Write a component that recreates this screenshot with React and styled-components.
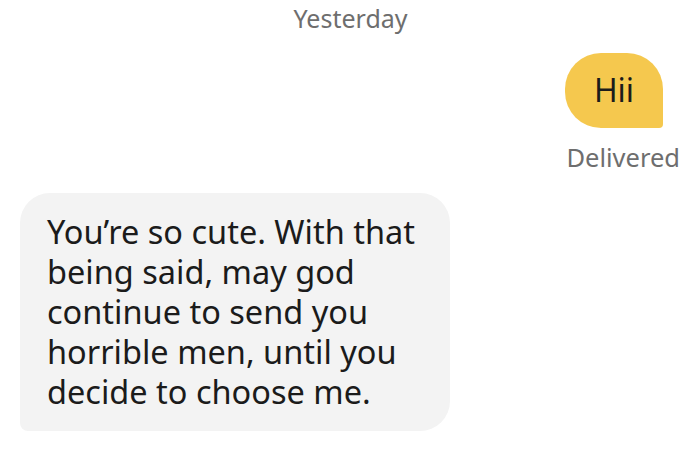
import React from "react";
import styled, { createGlobalStyle } from "styled-components";

const Global = createGlobalStyle`
  html, body { margin: 0; padding: 0; background: #ffffff; }
  body { font-family: "Noto Sans", "Open Sans", sans-serif; }
`;

const Screen = styled.div`
  width: 700px;
  height: 469px;
  box-sizing: border-box;
  padding: 3px 19px 0 19px;
  display: flex;
  flex-direction: column;
  background: #ffffff;
  overflow: hidden;
`;

const DayLabel = styled.div`
  text-align: center;
  color: #6e6e6e;
  font-size: 25px;
  line-height: 30px;
  padding-left: 1px;
`;

const Row = styled.div`
  display: flex;
  flex-direction: column;
  align-items: ${(p) => (p.$mine ? "flex-end" : "flex-start")};
  margin-top: ${(p) => p.$top}px;
`;

const SentBubble = styled.div`
  width: 98px;
  height: 75px;
  box-sizing: border-box;
  margin-right: 18px;
  background: #f5c84e;
  border-radius: 36px 36px 4px 36px;
  display: flex;
  align-items: center;
  justify-content: center;
  color: #1b1b1b;
  font-size: 32px;
  padding-bottom: 2px;
`;

const Status = styled.div`
  color: #6e6e6e;
  font-size: 25.5px;
  line-height: 30px;
  margin-top: 14px;
  margin-right: 1px;
`;

const ReceivedBubble = styled.div`
  width: 430px;
  box-sizing: border-box;
  margin-left: 1px;
  background: #f3f3f3;
  border-radius: 30px 30px 30px 8px;
  padding: 19px 14px 19px 27px;
  color: #1b1b1b;
  font-size: 32.5px;
  line-height: 40px;
`;

export default function App() {
  return (
    <>
      <Global />
      <Screen>
        <DayLabel>Yesterday</DayLabel>
        <Row $mine $top={20}>
          <SentBubble>Hii</SentBubble>
          <Status>Delivered</Status>
        </Row>
        <Row $top={21}>
          <ReceivedBubble>
            You’re so cute. With that being said, may god continue to send you
            horrible men, until you decide to choose me.
          </ReceivedBubble>
        </Row>
      </Screen>
    </>
  );
}
